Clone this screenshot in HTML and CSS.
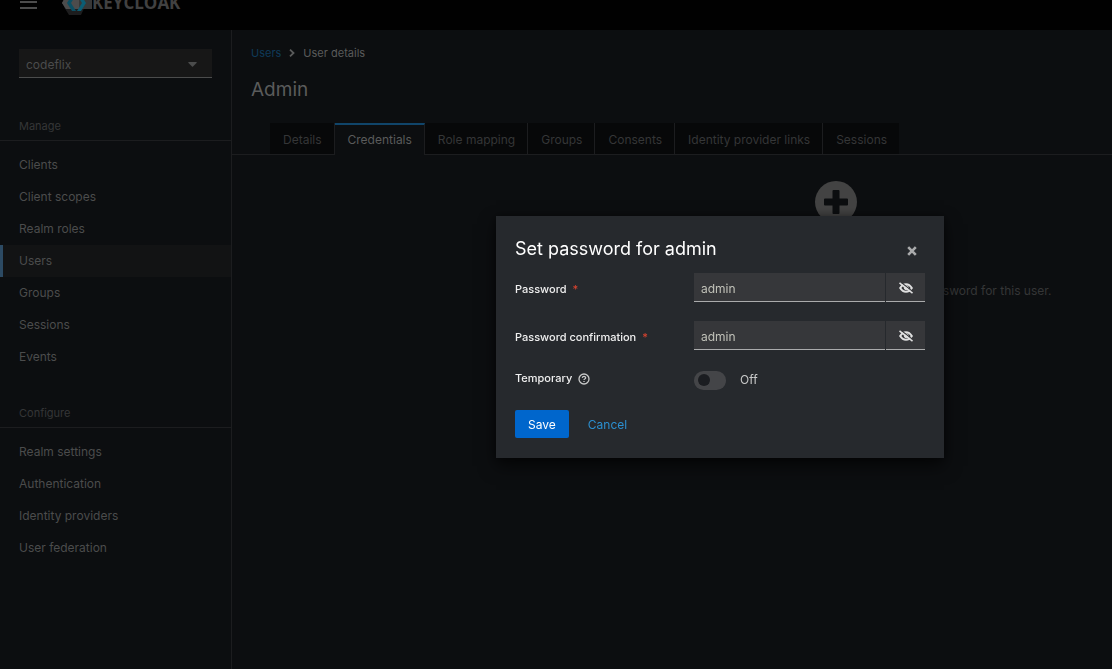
FILE: index.html
```html
<!DOCTYPE html>
<html lang="en">
<head>
<meta charset="utf-8">
<title>User details</title>
<link rel="stylesheet" href="styles.css">
</head>
<body>
<div class="app">
  <header class="masthead">
    <button class="menu-toggle" type="button" aria-label="Global navigation">
      <svg width="17" height="16" viewBox="0 0 17 16" fill="currentColor"><path d="M0 1h17v2H0zM0 7h17v2H0zM0 13h17v2H0z"/></svg>
    </button>
    <a class="brand" href="#">
      <svg class="brand-mark" width="30" height="30" viewBox="0 0 30 30">
        <path d="M7 5h13l5 12-6 13H7L2 22z" fill="#1d1d1e"/>
        <path d="M5 9h25v15H4L0 18z" fill="#383838"/>
        <path d="M5 9h12v15H4L0 18z" fill="#4c4c4c"/>
        <path d="M10 10h4l-5 8 5 8h-4l-5-8z" fill="#0b4f63"/>
        <path d="M15 10h4l5 8-5 8h-4l5-8z" fill="#0b5d74"/>
      </svg>
      <span class="brand-name">KEYCLOAK</span>
    </a>
  </header>
  <div class="body">
    <nav class="sidebar" aria-label="Global">
      <div class="realm">
        <select class="realm-select" aria-label="Realm"><option>codeflix</option></select>
        <svg class="caret" width="9" height="5" viewBox="0 0 9 5" fill="currentColor"><path d="M.5 0h8q.5.3 0 .9L5 4.600q-.5.4-1 0L.5.900Q0 .3.500 0z"/></svg>
      </div>
      <section class="nav-section">
        <h2 class="nav-title">Manage</h2>
        <ul class="nav-list">
          <li><a class="nav-link" href="#">Clients</a></li>
          <li><a class="nav-link" href="#">Client scopes</a></li>
          <li><a class="nav-link" href="#">Realm roles</a></li>
          <li><a class="nav-link current" href="#">Users</a></li>
          <li><a class="nav-link" href="#">Groups</a></li>
          <li><a class="nav-link" href="#">Sessions</a></li>
          <li><a class="nav-link" href="#">Events</a></li>
        </ul>
      </section>
      <section class="nav-section">
        <h2 class="nav-title">Configure</h2>
        <ul class="nav-list">
          <li><a class="nav-link" href="#">Realm settings</a></li>
          <li><a class="nav-link" href="#">Authentication</a></li>
          <li><a class="nav-link" href="#">Identity providers</a></li>
          <li><a class="nav-link" href="#">User federation</a></li>
        </ul>
      </section>
    </nav>
    <main class="main">
      <nav class="breadcrumb" aria-label="Breadcrumb">
        <a class="crumb" href="#">Users</a>
        <svg width="6" height="8" viewBox="0 0 6 8" fill="none" stroke="currentColor" stroke-width="1.800"><path d="M1 .7 4.500 4 1 7.300"/></svg>
        <span>User details</span>
      </nav>
      <h1 class="page-title">Admin</h1>
      <div class="tabs" role="tablist">
        <button class="tab" type="button" role="tab">Details</button>
        <button class="tab active" type="button" role="tab" aria-selected="true">Credentials</button>
        <button class="tab" type="button" role="tab">Role mapping</button>
        <button class="tab" type="button" role="tab">Groups</button>
        <button class="tab" type="button" role="tab">Consents</button>
        <button class="tab" type="button" role="tab">Identity provider links</button>
        <button class="tab" type="button" role="tab">Sessions</button>
      </div>
      <div class="empty">
        <svg width="42" height="42" viewBox="0 0 42 42"><circle cx="21" cy="21" r="21" fill="#434343"/><path d="M18.500 9h5q1 0 1 1v7.500H32q1 0 1 1v5q0 1-1 1h-7.500V32q0 1-1 1h-5q-1 0-1-1v-7.500H10q-1 0-1-1v-5q0-1 1-1h7.500V10q0-1 1-1z" fill="#0c0e10"/></svg>
        <p class="empty-text">This user does not have any credentials. You can set password for this user.</p>
      </div>
    </main>
  </div>
</div>
<div class="overlay">
  <form class="modal" role="dialog" aria-labelledby="modal-title">
    <div class="modal-head">
      <h2 class="modal-title" id="modal-title">Set password for admin</h2>
      <button class="close" type="button" aria-label="Close">
        <svg width="10" height="10" viewBox="0 0 10 10" stroke="currentColor" stroke-width="2.600"><path d="M1.200 1.200 8.800 8.800M8.800 1.200 1.200 8.800"/></svg>
      </button>
    </div>
    <div class="field">
      <label class="label" for="password">Password <span class="required">*</span></label>
      <div class="input-group">
        <input class="input" id="password" type="text" value="admin">
        <button class="reveal" type="button" aria-label="Hide password">
          <svg width="14" height="12" viewBox="0 0 14 12" fill="none" stroke="currentColor"><path d="M1.200 6Q3.500 2.200 7 2.200T12.800 6Q10.500 9.800 7 9.800T1.200 6z" stroke-width="2"/><circle cx="7.300" cy="5.700" r="2" fill="currentColor"/><path d="M1.500 0 14 9.800" stroke="#36373a" stroke-width="1.200"/><path d="M.5.800 13.500 11.200" stroke-width="1.600"/></svg>
        </button>
      </div>
    </div>
    <div class="field">
      <label class="label" for="confirmation">Password confirmation <span class="required">*</span></label>
      <div class="input-group">
        <input class="input" id="confirmation" type="text" value="admin">
        <button class="reveal" type="button" aria-label="Hide password confirmation">
          <svg width="14" height="12" viewBox="0 0 14 12" fill="none" stroke="currentColor"><path d="M1.200 6Q3.500 2.200 7 2.200T12.800 6Q10.500 9.800 7 9.800T1.200 6z" stroke-width="2"/><circle cx="7.300" cy="5.700" r="2" fill="currentColor"/><path d="M1.500 0 14 9.800" stroke="#36373a" stroke-width="1.200"/><path d="M.5.800 13.500 11.200" stroke-width="1.600"/></svg>
        </button>
      </div>
    </div>
    <div class="field switch-field">
      <div class="label">
        <label for="temporary">Temporary</label>
        <button class="help" type="button" aria-label="Help for Temporary">
          <svg width="12" height="12" viewBox="0 0 12 12" fill="none" stroke="currentColor" stroke-width="1.300"><circle cx="6" cy="6" r="5"/><path d="M4.300 4.900Q4.500 3.400 6 3.400T7.700 4.800Q7.700 5.500 6.700 6 6 6.300 6 7M6 7.900V9"/></svg>
        </button>
      </div>
      <div class="switch">
        <input class="toggle" id="temporary" type="checkbox">
        <span>Off</span>
      </div>
    </div>
    <div class="actions">
      <button class="save" type="submit">Save</button>
      <button class="cancel" type="button">Cancel</button>
    </div>
  </form>
</div>
</body>
</html>
```

FILE: styles.css
```css
* { box-sizing: border-box; }
body {
  margin: 0;
  background: #0c0e10;
  color: #4b4c4c;
  font: 12px/20px Inter, "Liberation Sans", sans-serif;
  overflow: hidden;
}
h1, h2, p, ul { margin: 0; padding: 0; font-weight: 400; }
ul { list-style: none; }
button, input, select { font: inherit; color: inherit; border: 0; border-radius: 0; margin: 0; padding: 0; background: none; }
a { color: inherit; text-decoration: none; }
svg { display: block; flex: none; }

.app { display: flex; flex-direction: column; min-height: 100vh; }
.masthead {
  display: flex;
  align-items: flex-end;
  gap: 25px;
  height: 30px;
  padding: 0 20px 15px;
  background: #010101;
  overflow: hidden;
}
.menu-toggle { padding-bottom: 5px; color: #4c4c4c; }
.brand { display: flex; align-items: flex-end; }
.brand-name { font: 700 17px/24px "Open Sans", sans-serif; color: #414141; }

.body { display: flex; flex: 1; }
.sidebar { flex: none; width: 232px; border-right: 1px solid #1c1d1f; }
.realm { position: relative; margin: 19px 19px 28px; }
.realm-select {
  display: block;
  appearance: none;
  width: 100%;
  height: 29px;
  padding: 3px 7px 0;
  background: #171717;
  border-bottom: 1px solid #4b4c4c;
}
.caret { position: absolute; right: 15px; top: 13px; }
.nav-section { padding-top: 10px; margin-bottom: 20px; }
.nav-title { padding: 0 19px 4px; border-bottom: 1px solid #1c1d1f; font-size: 11px; line-height: 20px; color: #353637; }
.nav-list { padding-top: 8px; }
.nav-link { display: block; padding: 6px 19px; }
.nav-link.current { padding-left: 16px; border-left: 3px solid #2c4a63; background: #121314; }

.main { flex: 1; min-width: 0; }
.breadcrumb { display: flex; align-items: center; gap: 8px; padding: 13px 19px 0; font-size: 11px; color: #5a5b5b; }
.crumb { color: #0f3a58; }
.page-title { padding: 13px 19px 0; font-size: 19px; line-height: 28px; color: #5a5b5b; }
.tabs { display: flex; margin-top: 19px; padding-left: 38px; border-bottom: 1px solid #1c1d1f; }
.tab { height: 31px; padding: 2px 12px 0 13px; background: #070809; border-right: 1px solid #1c1d1f; color: #353637; white-space: nowrap; }
.tab:last-child { border-right: 0; }
.tab.active { height: 32px; margin-bottom: -1px; border-top: 2px solid #10456a; padding-top: 0; background: #0c0e10; color: #5a5b5b; }
.empty { display: flex; flex-direction: column; align-items: center; gap: 58px; padding: 26px 0 0 328px; color: #353637; }
.empty-text { white-space: nowrap; }

.overlay { position: fixed; inset: 0; padding: 216px 0 0 328px; }
.modal {
  width: 448px;
  margin: 0 auto;
  padding: 19px 19px 20px;
  background: #26292d;
  color: #c8c9c9;
  box-shadow: 0 8px 16px rgba(0, 0, 0, .6), 0 0 8px rgba(0, 0, 0, .4);
}
.modal-head { display: flex; align-items: center; justify-content: space-between; margin-bottom: 10px; }
.modal-title { font-size: 18px; line-height: 28px; color: #fff; }
.close { padding: 8px 8px 5px; color: #aaabac; }
.field { display: grid; grid-template-columns: 179px minmax(0, 1fr); margin-bottom: 19px; }
.label { display: flex; gap: 6px; padding-top: 6px; font-size: 11px; font-weight: 500; color: #f0f0f0; }
.required { color: #d9432f; }
.input-group { display: flex; gap: 1px; }
.input { flex: 1; min-width: 0; height: 29px; padding: 2px 7px 0; background: #36373a; border-bottom: 1px solid #aaabac; color: #c0c1b8; }
.reveal { display: grid; place-items: center; width: 39px; padding-top: 2px; background: #36373a; border-bottom: 1px solid #aaabac; color: #e0e0e0; }
.switch-field { height: 22px; }
.switch-field .label { align-items: center; height: 18px; padding-top: 0; }
.help { padding-top: 2px; color: #c8c9c9; }
.switch { display: flex; align-items: center; gap: 14px; height: 22px; }
.toggle { appearance: none; display: flex; align-items: center; width: 32px; height: 19px; padding-left: 4px; border-radius: 10px; background: #444548; }
.toggle::before { content: ""; width: 12px; height: 12px; border-radius: 6px; background: #1b1d21; }
.actions { display: flex; gap: 6px; }
.save { height: 28px; padding: 1px 13px 0; border-radius: 2px; background: #0066cc; color: #fff; }
.cancel { height: 28px; padding: 1px 13px 0; color: #2b8fd0; }
```
